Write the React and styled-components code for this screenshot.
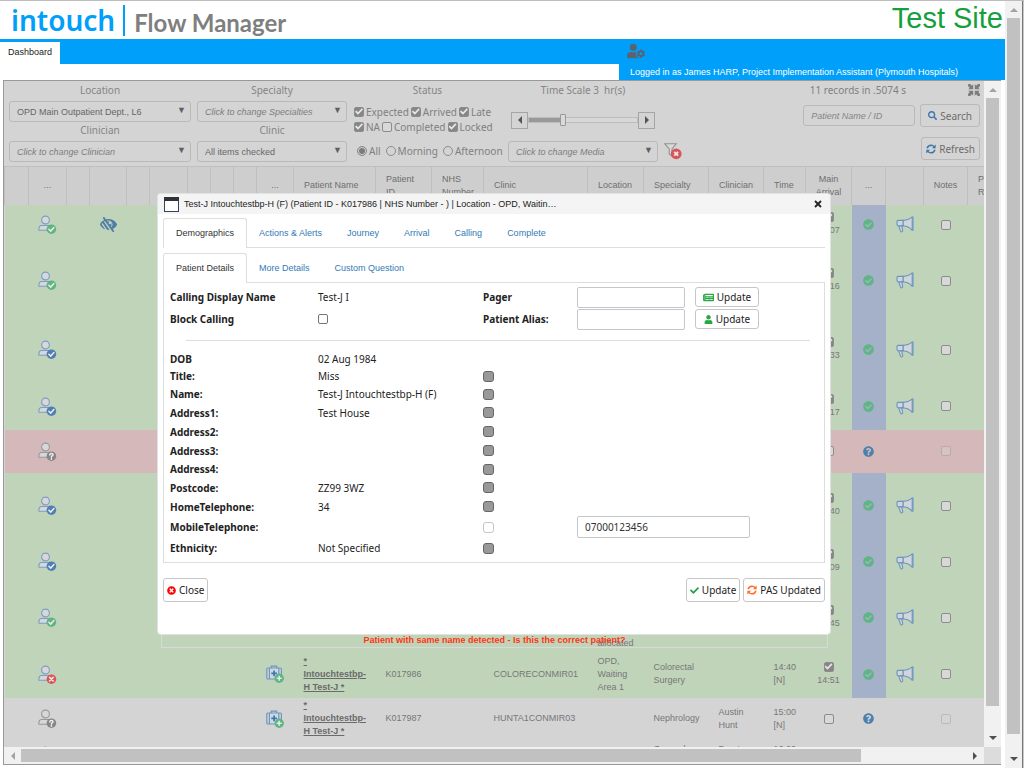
import React from "react";
import styled, { createGlobalStyle } from "styled-components";
import {
  FaCheck,
  FaCheckCircle,
  FaLowVision,
  FaNewspaper,
  FaQuestionCircle,
  FaSearch,
  FaTimesCircle,
  FaUser,
  FaUserCog,
} from "react-icons/fa";

const colors = {
  brand: "#009ffa",
  dim: "#d4d4d4",
  dimHeader: "#cecece",
  dimBorder: "#b9b9b9",
  dimText: "#777",
  green: "#c0d4ba",
  red: "#d5b9ba",
  status: "#a4b1c9",
  badgeBlue: "#4f7fb5",
  badgeGreen: "#5fb583",
  badgeRed: "#db5459",
  badgeGray: "#868686",
};

const arial = '"Liberation Sans", Arial, sans-serif';
const noto = '"Noto Sans", "Open Sans", sans-serif';

const columns = [
  { width: 24 },
  { width: 38, title: "...", center: true },
  { width: 23 },
  { width: 37 },
  { width: 23 },
  { width: 38 },
  { width: 23 },
  { width: 23 },
  { width: 23 },
  { width: 37, title: "...", center: true },
  { width: 82, title: "Patient Name" },
  { width: 56, title: "Patient\nID" },
  { width: 52, title: "NHS\nNumber" },
  { width: 104, title: "Clinic" },
  { width: 56, title: "Location" },
  { width: 65, title: "Specialty" },
  { width: 55, title: "Clinician" },
  { width: 42, title: "Time" },
  { width: 46, title: "Main\nArrival", center: true },
  { width: 34, title: "...", center: true },
  { width: 38 },
  { width: 44, title: "Notes", center: true },
  { width: 137, title: "Patient\nReady" },
];

const rows = [
  { height: 40, tone: "green", badge: "greenCheck", hidden: true, arrived: "14:07" },
  { height: 72, tone: "green", badge: "greenCheck", arrived: "14:16" },
  { height: 66, tone: "green", badge: "blueCheck", arrived: "14:33" },
  { height: 47, tone: "green", badge: "blueCheck", arrived: "14:17" },
  { height: 43, tone: "red", badge: "question" },
  { height: 66, tone: "green", badge: "blueCheck", arrived: "14:40" },
  { height: 46, tone: "green", badge: "blueCheck", arrived: "14:09" },
  {
    height: 66,
    tone: "green",
    badge: "greenCheck",
    arrived: "14:45",
    location: "OPD,\nWaiting\nArea 1\nNot\nallocated",
  },
  {
    height: 47,
    tone: "green",
    badge: "cross",
    kit: true,
    name: "*\nIntouchtestbp-\nH Test-J *",
    id: "K017986",
    clinic: "COLORECONMIR01",
    location: "OPD,\nWaiting\nArea 1",
    specialty: "Colorectal\nSurgery",
    time: "14:40\n[N]",
    arrived: "14:51",
  },
  {
    height: 42,
    badge: "question",
    kit: true,
    name: "*\nIntouchtestbp-\nH Test-J *",
    id: "K017987",
    clinic: "HUNTA1CONMIR03",
    specialty: "Nephrology",
    clinician: "Austin\nHunt",
    time: "15:00\n[N]",
  },
  {
    height: 32,
    badge: "question",
    kit: true,
    specialty: "General\nSurgery",
    clinician: "Brent\nHunt",
    time: "16:00\n[N]",
  },
];

const details = [
  { label: "DOB", value: "02 Aug 1984", height: 17 },
  { label: "Title:", value: "Miss", height: 18, locked: true },
  { label: "Name:", value: "Test-J Intouchtestbp-H (F)", height: 18, locked: true },
  { label: "Address1:", value: "Test House", height: 19, locked: true },
  { label: "Address2:", height: 19, locked: true },
  { label: "Address3:", height: 19, locked: true },
  { label: "Address4:", height: 18, locked: true },
  { label: "Postcode:", value: "ZZ99 3WZ", height: 19, locked: true },
  { label: "HomeTelephone:", value: "34", height: 19, locked: true },
  { label: "MobileTelephone:", height: 22, phone: "07000123456" },
  { label: "Ethnicity:", value: "Not Specified", height: 20, locked: true },
];

/* icons */

const badgeShapes = {
  greenCheck: { fill: colors.badgeGreen, d: "M10.9 14.3l1.8 1.8 3.2-3.5" },
  blueCheck: { fill: colors.badgeBlue, d: "M10.9 14.3l1.8 1.8 3.2-3.5" },
  cross: { fill: colors.badgeRed, d: "M11.6 12.4l3.6 3.6M15.2 12.4l-3.6 3.6" },
  question: {
    fill: colors.badgeGray,
    d: "M11.8 12.9c0-2 3.2-1.9 3.2 0 0 1-1.6 1-1.6 2M13.4 16.4v.8",
  },
};

const PersonIcon = ({ badge }) => {
  const { fill, d } = badgeShapes[badge];
  const outline = badge === "question" ? "#999" : "#7e9dc4";

  return (
    <Svg width="19" height="19" viewBox="0 0 19 19">
      <circle cx="7.5" cy="5" r="3.9" fill="#d6d8dc" stroke={outline} strokeWidth="1.1" />
      <path
        d="M.9 15.3v-1.8c0-1.8 1.2-3 3-3h7.2c1.8 0 3 1.2 3 3v1.8z"
        fill="#d6d8dc"
        stroke={outline}
        strokeWidth="1.1"
      />
      <circle cx="13.4" cy="14.2" r="4.8" fill={fill} />
      <path d={d} fill="none" stroke="#ececec" strokeWidth="1.5" strokeLinecap="round" />
    </Svg>
  );
};

const MegaphoneIcon = () => (
  <Svg width="18" height="17" viewBox="0 0 18 17">
    <g fill="#d2d6dc" stroke="#6c95be" strokeWidth="1.1" strokeLinejoin="round">
      <path d="M2.5 9.6L4.6 15.2c.6 1.2 2.4.6 2.1-.8L5.6 9.6z" />
      <path d="M7 4.4C11 4.3 13.8 3 16.2.9v13.4C13.8 11.5 11 9.9 7 9.7z" />
      <path d="M2 4.4h5v5.3H2C.6 9.7.6 4.4 2 4.4z" />
      <path d="M17 .6v14.2M4 9.7h4" fill="none" />
    </g>
  </Svg>
);

const MedkitIcon = () => (
  <Svg width="18" height="18" viewBox="0 0 18 18">
    <g fill="#cfd8de" stroke="#6f96bd" strokeWidth="1.2">
      <path d="M5.3 3V1.2h5.4V3" fill="none" />
      <rect x=".8" y="3" width="14.6" height="11" rx="1" />
      <path d="M3.4 3v11M12.8 3v11" />
    </g>
    <path d="M8.1 5.6v5.6M5.3 8.4h5.6" stroke="#3f75ad" strokeWidth="1.7" />
    <circle cx="13.2" cy="13.2" r="4.7" fill={colors.badgeGreen} />
    <path d="M13.2 10.7v5M10.7 13.2h5" stroke="#e4ece6" strokeWidth="1.5" />
  </Svg>
);

const RefreshIcon = ({ color }) => (
  <Svg width="10" height="10" viewBox="0 0 12 12">
    <g fill="none" stroke={color} strokeWidth="1.8">
      <path d="M1.3 5.2C2 2.8 3.8 1.4 6 1.4c1.5 0 2.8.6 3.7 1.8" />
      <path d="M10.7 6.8C10 9.2 8.2 10.6 6 10.6c-1.5 0-2.8-.6-3.7-1.8" />
    </g>
    <path d="M11.6.6v4.4H7.2zM.4 11.4V7h4.4z" fill={color} />
  </Svg>
);

const ClearFilterIcon = () => (
  <Svg width="18" height="17" viewBox="0 0 18 17">
    <path
      d="M.8.8h11.4L8 6v7.2L5.2 11V6z"
      fill="#d9d9d9"
      stroke="#929292"
      strokeWidth="1.1"
    />
    <circle cx="12.2" cy="10.8" r="5.4" fill={colors.badgeRed} />
    <path d="M10.3 8.9l3.8 3.8M14.1 8.9l-3.8 3.8" stroke="#e8e8e8" strokeWidth="1.9" />
  </Svg>
);

const CompressIcon = () => (
  <Svg width="12" height="12" viewBox="0 0 12 12">
    <path
      d="M5.2 5.2V.3L3.8 1.7 2.2.1H.1v2.1l1.6 1.6L.3 5.2zM6.8 5.2V.3l1.4 1.4L9.8.1h2.1v2.1l-1.6 1.6 1.4 1.4zM5.2 6.8v4.9l-1.4-1.4-1.6 1.6H.1V9.8l1.6-1.6L.3 6.8zM6.8 6.8v4.9l1.4-1.4 1.6 1.6h2.1V9.8l-1.6-1.6 1.4-1.4z"
      fill="#7c7c7c"
    />
  </Svg>
);

const WindowIcon = () => (
  <Svg width="15" height="15" viewBox="0 0 15 15">
    <rect x=".5" y=".5" width="14" height="14" fill="#fff" stroke="#35425c" />
    <path d="M0 0h15v4H0z" fill="#2f3237" />
  </Svg>
);

const arrowShapes = {
  up: "M0 6l4-4 4 4z",
  down: "M0 2l4 4 4-4z",
  left: "M6 0L2 4l4 4z",
  right: "M2 0l4 4-4 4z",
};

const Arrow = ({ to, color }) => (
  <Svg width="8" height="8" viewBox="0 0 8 8">
    <path d={arrowShapes[to]} fill={color} />
  </Svg>
);

/* building blocks */

const Dropdown = ({ label, value, italic }) => (
  <Field>
    {label && <FieldLabel htmlFor={label}>{label}</FieldLabel>}
    <SelectWrap>
      <Select id={label} aria-label={value} $italic={italic}>
        <option>{value}</option>
      </Select>
      <SelectArrow>▼</SelectArrow>
    </SelectWrap>
  </Field>
);

const Tick = ({ label, ...props }) => (
  <TickLabel>
    <Checkbox type="checkbox" $dim {...props} />
    {label}
  </TickLabel>
);

const Period = ({ label, ...props }) => (
  <TickLabel>
    <Radio type="radio" name="period" {...props} />
    {label}
  </TickLabel>
);

const Filters = () => (
  <FilterBar>
    <Stack>
      <Dropdown label="Location" value="OPD Main Outpatient Dept., L6" />
      <Dropdown label="Clinician" value="Click to change Clinician" italic />
    </Stack>
    <Stack>
      <Dropdown label="Specialty" value="Click to change Specialties" italic />
      <Dropdown label="Clinic" value="All items checked" />
    </Stack>
    <Stack>
      <FieldLabel as="span">Status</FieldLabel>
      <Ticks>
        <TickRow>
          <Tick label="Expected" defaultChecked />
          <Tick label="Arrived" defaultChecked />
          <Tick label="Late" defaultChecked />
        </TickRow>
        <TickRow>
          <Tick label="NA" defaultChecked />
          <Tick label="Completed" />
          <Tick label="Locked" defaultChecked />
        </TickRow>
      </Ticks>
      <Periods>
        <Period label="All" defaultChecked />
        <Period label="Morning" />
        <Period label="Afternoon" />
      </Periods>
    </Stack>
    <Stack>
      <FieldLabel htmlFor="scale">Time Scale 3 &nbsp;hr(s)</FieldLabel>
      <SliderRow>
        <StepButton aria-label="Less">
          <Arrow to="left" color="#555" />
        </StepButton>
        <Slider id="scale" type="range" min="0" max="10" defaultValue="3" />
        <StepButton aria-label="More">
          <Arrow to="right" color="#555" />
        </StepButton>
      </SliderRow>
      <Dropdown value="Click to change Media" italic />
    </Stack>
    <ClearFilter aria-label="Clear filters">
      <ClearFilterIcon />
    </ClearFilter>
    <SearchArea>
      <RecordLine>
        <span>11 records in .5074 s</span>
        <CompressIcon />
      </RecordLine>
      <SearchLine>
        <SearchInput aria-label="Patient Name / ID" placeholder="Patient Name / ID" />
        <DimButton>
          <FaSearch size={9} color="#3f75ad" />
          Search
        </DimButton>
      </SearchLine>
      <DimButton $tight>
        <RefreshIcon color="#3f75ad" />
        Refresh
      </DimButton>
    </SearchArea>
  </FilterBar>
);

const QueueRow = ({ row }) => (
  <Row $height={row.height} $tone={row.tone}>
    <Cell />
    <Cell $center>
      <PersonIcon badge={row.badge} />
    </Cell>
    <Cell />
    <Cell $center>{row.hidden && <FaLowVision size={17} color="#4f7fa8" />}</Cell>
    <Cell colSpan={5} />
    <Cell $center>{row.kit && <MedkitIcon />}</Cell>
    <Cell>{row.name && <PatientLink href="#patient">{row.name}</PatientLink>}</Cell>
    <Cell>{row.id}</Cell>
    <Cell />
    <Cell>{row.clinic}</Cell>
    <Cell>{row.location}</Cell>
    <Cell>{row.specialty}</Cell>
    <Cell>{row.clinician}</Cell>
    <Cell>{row.time}</Cell>
    <Cell $center>
      <Centered>
        <Checkbox type="checkbox" aria-label="Arrived" $dim defaultChecked={!!row.arrived} />
        {row.arrived && <span>{row.arrived}</span>}
      </Centered>
    </Cell>
    <Cell $center $status={!!row.arrived}>
      {row.arrived ? (
        <FaCheckCircle size={11} color={colors.badgeGreen} />
      ) : (
        <FaQuestionCircle size={11} color="#4c80ad" />
      )}
    </Cell>
    <Cell $center>{row.arrived && <MegaphoneIcon />}</Cell>
    <Cell $center>
      <Centered>
        <Checkbox type="checkbox" aria-label="Notes" $dim disabled={!row.arrived} />
      </Centered>
    </Cell>
    <Cell />
  </Row>
);

const Queue = () => (
  <Table>
    <colgroup>
      {columns.map((column, i) => (
        <Column key={i} $width={column.width} />
      ))}
    </colgroup>
    <thead>
      <tr>
        {columns.map((column, i) => (
          <HeadCell key={i} $center={column.center}>
            {column.title}
          </HeadCell>
        ))}
      </tr>
    </thead>
    <tbody>
      {rows.map((row, i) => (
        <QueueRow key={i} row={row} />
      ))}
    </tbody>
  </Table>
);

const PatientDialog = () => (
  <DialogWrap>
    <Dialog role="dialog" aria-label="Patient">
      <DialogHeader>
        <WindowIcon />
        <DialogTitle>
          Test-J Intouchtestbp-H (F) (Patient ID - K017986 | NHS Number - ) | Location - OPD,
          Waitin…
        </DialogTitle>
        <CloseCross aria-label="Close window">
          <Svg width="8" height="8" viewBox="0 0 8 8">
            <path d="M1 1l6 6M7 1L1 7" stroke="#222" strokeWidth="1.8" />
          </Svg>
        </CloseCross>
      </DialogHeader>
      <DialogBody>
        <Tabs>
          <Tab $active>Demographics</Tab>
          <Tab>Actions &amp; Alerts</Tab>
          <Tab>Journey</Tab>
          <Tab>Arrival</Tab>
          <Tab>Calling</Tab>
          <Tab>Complete</Tab>
        </Tabs>
        <Tabs $inner>
          <Tab $active>Patient Details</Tab>
          <Tab>More Details</Tab>
          <Tab>Custom Question</Tab>
        </Tabs>
        <Panel>
          <DetailRow $height={22}>
            <Label as="span">Calling Display Name</Label>
            <span>Test-J I</span>
            <Label htmlFor="pager">Pager</Label>
            <Controls>
              <TextInput id="pager" />
              <SmallButton>
                <FaNewspaper size={11} color="#28a745" />
                Update
              </SmallButton>
            </Controls>
          </DetailRow>
          <DetailRow $height={22}>
            <Label htmlFor="block">Block Calling</Label>
            <Checkbox id="block" type="checkbox" />
            <Label htmlFor="alias">Patient Alias:</Label>
            <Controls>
              <TextInput id="alias" />
              <SmallButton>
                <FaUser size={9} color="#28a745" />
                Update
              </SmallButton>
            </Controls>
          </DetailRow>
          <Divider />
          {details.map(({ label, value, height, locked, phone }) => (
            <DetailRow key={label} $height={height}>
              <Label as={phone ? "label" : "span"} htmlFor={phone && "mobile"}>
                {label}
              </Label>
              <span>{value}</span>
              {locked || phone ? (
                <LockBox type="checkbox" aria-label={label} disabled={locked} />
              ) : (
                <span />
              )}
              {phone && <TextInput id="mobile" $wide defaultValue={phone} />}
            </DetailRow>
          ))}
        </Panel>
        <Footer>
          <FooterButton>
            <FaTimesCircle size={9} color="#f00" />
            Close
          </FooterButton>
          <FooterGroup>
            <FooterButton>
              <FaCheck size={9} color="#28a04a" />
              Update
            </FooterButton>
            <FooterButton>
              <RefreshIcon color="#ff6a2b" />
              PAS Updated
            </FooterButton>
          </FooterGroup>
        </Footer>
      </DialogBody>
    </Dialog>
    <Warning>Patient with same name detected - Is this the correct patient?</Warning>
  </DialogWrap>
);

const App = () => (
  <>
    <GlobalStyle />
    <Page>
      <Main>
        <Header>
          <Brand>intouch</Brand>
          <Product>Flow Manager</Product>
          <SiteName>Test Site</SiteName>
        </Header>
        <Nav>
          <NavBar>
            <NavTab href="#dashboard">Dashboard</NavTab>
          </NavBar>
          <UserPanel>
            <FaUserCog size={18} color="#5a6470" />
            <span>
              Logged in as James HARP, Project Implementation Assistant (Plymouth Hospitals)
            </span>
          </UserPanel>
        </Nav>
        <Frame>
          <Content>
            <Filters />
            <Queue />
            <Overlay>
              <PatientDialog />
            </Overlay>
          </Content>
          <VerticalBar>
            <Arrow to="up" color="#a3a3a3" />
            <Thumb $share={608} />
            <Space $share={20} />
            <Arrow to="down" color="#505050" />
          </VerticalBar>
          <HorizontalBar>
            <Arrow to="left" color="#a3a3a3" />
            <Thumb $share={841} />
            <Space $share={102} />
            <Arrow to="right" color="#505050" />
          </HorizontalBar>
          <Corner />
        </Frame>
      </Main>
      <VerticalBar>
        <Arrow to="up" color="#a3a3a3" />
        <Thumb $share={716} />
        <Space $share={13} />
        <Arrow to="down" color="#505050" />
      </VerticalBar>
      <Edge />
    </Page>
  </>
);

const GlobalStyle = createGlobalStyle`
  * {
    box-sizing: border-box;
  }

  body {
    margin: 0;
    background: #fff;
    font-family: ${arial};
    font-size: 9px;
  }

  button, input, select {
    margin: 0;
    font: inherit;
  }
`;

const Svg = styled.svg`
  display: block;
  flex: none;
`;

const Page = styled.div`
  display: flex;
  height: 100vh;
  overflow: hidden;
  border-top: 1px solid #bdbdbd;
`;

const Main = styled.div`
  flex: 1;
  min-width: 0;
  display: flex;
  flex-direction: column;
`;

const Edge = styled.div`
  width: 2px;
  border-left: 1px solid #777;
  background: #c9c9c9;
`;

const Header = styled.header`
  display: flex;
  align-items: center;
  height: 38px;
  padding: 0 2px 0 11px;
`;

const Brand = styled.span`
  padding-right: 8px;
  border-right: 2px solid ${colors.brand};
  color: ${colors.brand};
  font-family: ${noto};
  font-size: 28px;
  font-weight: 600;
  line-height: 31px;
`;

const Product = styled.span`
  flex: 1;
  padding: 5px 0 0 9px;
  color: #7f7f7f;
  font-family: Lato, sans-serif;
  font-size: 24px;
  font-weight: 700;
  line-height: 28px;
`;

const SiteName = styled.span`
  padding-bottom: 4px;
  color: #16a03c;
  font-size: 29px;
  line-height: 32px;
`;

const Nav = styled.nav`
  display: flex;
  height: 41px;
  flex: none;
`;

const NavBar = styled.div`
  flex: 1;
  display: flex;
  height: 25px;
  padding-top: 3px;
  background: ${colors.brand};
`;

const NavTab = styled.a`
  padding: 0 8px;
  background: #fff;
  color: #222;
  line-height: 20px;
  text-decoration: none;
`;

const UserPanel = styled.div`
  display: flex;
  flex-direction: column;
  justify-content: space-between;
  width: 386px;
  padding: 3px 8px 2px;
  background: ${colors.brand};
  color: #fff;
  line-height: 12px;

  span {
    padding-left: 3px;
  }
`;

const Frame = styled.div`
  flex: 1;
  min-height: 0;
  display: grid;
  grid-template-columns: minmax(0, 1fr) 17px;
  grid-template-rows: minmax(0, 1fr) 17px;
  margin: 0 4px 3px 3px;
  border: 1px solid #999;
  border-right: 0;
`;

const Content = styled.div`
  position: relative;
  overflow: hidden;
  background: ${colors.dim};
  color: ${colors.dimText};
`;

const VerticalBar = styled.div`
  display: flex;
  flex-direction: column;
  align-items: center;
  gap: 4px;
  width: 17px;
  padding: 5px 2px;
  background: #f1f1f1;
`;

const HorizontalBar = styled.div`
  display: flex;
  align-items: center;
  gap: 4px;
  padding: 2px 5px;
  background: #f1f1f1;
`;

const Thumb = styled.div`
  flex: ${props => props.$share};
  align-self: stretch;
  background: #c1c1c1;
`;

const Space = styled.div`
  flex: ${props => props.$share};
`;

const Corner = styled.div`
  background: #dcdcdc;
`;

const FilterBar = styled.form`
  display: grid;
  grid-template-columns: 182px 150px 149px 150px 18px minmax(0, 1fr);
  column-gap: 6px;
  height: 85px;
  padding: 0 4px 0 5px;
`;

const Stack = styled.div`
  display: flex;
  flex-direction: column;
`;

const Field = styled.div`
  display: flex;
  flex-direction: column;
`;

const FieldLabel = styled.label`
  margin-bottom: 2px;
  color: #858585;
  font-family: ${noto};
  font-size: 10px;
  line-height: 18px;
  text-align: center;
  white-space: nowrap;
`;

const SelectWrap = styled.div`
  position: relative;
  height: 20px;
`;

const Select = styled.select`
  width: 100%;
  height: 21px;
  padding: 0 18px 0 7px;
  appearance: none;
  border: 1px solid ${colors.dimBorder};
  border-radius: 3px;
  background: transparent;
  color: ${props => props.$italic ? "#7d7d7d" : "#666"};
  font-style: ${props => props.$italic ? "italic" : "normal"};
`;

const SelectArrow = styled.span`
  position: absolute;
  top: 0;
  right: 5px;
  color: #606060;
  font-size: 9px;
  line-height: 19px;
  pointer-events: none;
`;

const Checkbox = styled.input`
  display: block;
  flex: none;
  width: 10px;
  height: 10px;
  appearance: none;
  border: 1px solid ${props => props.$dim ? "#8c8c8c" : "#767676"};
  border-radius: 2px;
  background: ${props => props.$dim ? "#d8d8d8" : "#fff"};

  &:checked {
    background: #868686;
  }

  &:checked::before {
    content: "";
    display: block;
    width: 8px;
    height: 8px;
    background: #e6e6e6;
    clip-path: polygon(0% 52%, 16% 36%, 38% 58%, 84% 10%, 100% 26%, 38% 90%);
  }

  &:disabled {
    opacity: 0.35;
  }
`;

const Radio = styled.input`
  flex: none;
  width: 10px;
  height: 10px;
  appearance: none;
  border: 1px solid #8c8c8c;
  border-radius: 50%;

  &:checked {
    background: #7b7b7b;
    box-shadow: inset 0 0 0 1px ${colors.dim};
  }
`;

const Ticks = styled.div`
  padding: 3px 0 7px 1px;
`;

const TickRow = styled.div`
  display: flex;
  gap: 2px;
  height: 15px;
`;

const TickLabel = styled.label`
  display: flex;
  align-items: center;
  gap: 2px;
  color: #808080;
  font-family: ${noto};
  font-size: 10px;
`;

const Periods = styled.div`
  display: flex;
  gap: 5px;
  height: 20px;
  padding-left: 4px;
`;

const SliderRow = styled.div`
  display: flex;
  align-items: center;
  height: 40px;
  padding: 0 3px 2px;
`;

const StepButton = styled.button`
  display: grid;
  place-items: center;
  flex: none;
  width: 17px;
  height: 17px;
  padding: 0;
  border: 1px solid #a5a5a5;
  background: #d4d4d4;
`;

const Slider = styled.input`
  flex: 1;
  min-width: 0;
  height: 12px;
  appearance: none;
  background: transparent;

  &::-webkit-slider-runnable-track {
    height: 6px;
    border: 1px solid #bcbcbc;
    background: linear-gradient(to right, #999 30%, #d8d8d8 30%);
  }

  &::-webkit-slider-thumb {
    width: 6px;
    height: 12px;
    margin-top: -4px;
    appearance: none;
    border: 1px solid #999;
    border-radius: 1px;
    background: #dadada;
  }
`;

const ClearFilter = styled.button`
  align-self: end;
  margin-bottom: 6px;
  padding: 0;
  border: 0;
  background: none;
`;

const SearchArea = styled.div`
  display: flex;
  flex-direction: column;
  align-items: flex-end;
`;

const RecordLine = styled.div`
  display: flex;
  align-items: center;
  gap: 62px;
  height: 18px;
  color: #808080;
  font-family: ${noto};
  font-size: 10px;
  white-space: nowrap;
`;

const SearchLine = styled.div`
  display: flex;
  align-items: center;
  gap: 5px;
  padding: 5px 0 10px;
`;

const SearchInput = styled.input`
  width: 112px;
  height: 21px;
  padding: 0 7px;
  border: 1px solid ${colors.dimBorder};
  border-radius: 3px;
  background: transparent;

  &::placeholder {
    color: #858585;
    font-style: italic;
  }
`;

const Button = styled.button`
  display: flex;
  align-items: center;
  justify-content: center;
  gap: 3px;
  border: 1px solid #c6c6c6;
  border-radius: 3px;
  background: #fff;
  color: #222;
  font-family: ${noto};
  font-size: 10px;
  line-height: 14px;
  white-space: nowrap;
`;

const DimButton = styled(Button)`
  height: 23px;
  padding: 0 ${props => props.$tight ? "4px" : "7px"};
  border-color: ${colors.dimBorder};
  background: transparent;
  color: #6c6c6c;
`;

const SmallButton = styled(Button)`
  width: 64px;
  height: 20px;
  padding: 0;
`;

const FooterButton = styled(Button)`
  height: 24px;
  padding: 0 3px;
`;

const Table = styled.table`
  width: 1100px;
  table-layout: fixed;
  border-collapse: collapse;
  line-height: 13px;
`;

const Column = styled.col`
  width: ${props => props.$width}px;
`;

const HeadCell = styled.th`
  height: 38px;
  padding: 0 0 0 ${props => props.$center ? "0" : "10px"};
  border: solid #bfbfbf;
  border-width: 1px 1px 0;
  background: ${colors.dimHeader};
  color: #6f6f6f;
  font-weight: 400;
  text-align: ${props => props.$center ? "center" : "left"};
  white-space: pre-line;
`;

const Row = styled.tr`
  height: ${props => props.$height}px;
  background: ${props => colors[props.$tone] || "transparent"};
`;

const Cell = styled.td`
  padding: 0 0 0 ${props => props.$center ? "0" : "10px"};
  background: ${props => props.$status ? colors.status : "transparent"};
  text-align: ${props => props.$center ? "center" : "left"};
  white-space: pre-line;

  > svg {
    display: block;
    margin: 0 auto;
  }
`;

const PatientLink = styled.a`
  color: #6a6a6a;
  font-weight: 700;
`;

const Centered = styled.div`
  display: flex;
  flex-direction: column;
  align-items: center;
  gap: 2px;
`;

const Overlay = styled.div`
  position: absolute;
  inset: 0;
  display: grid;
  place-items: center;
`;

const DialogWrap = styled.div`
  position: relative;
  z-index: 0;
  width: 674px;
  max-width: 100%;
`;

const Dialog = styled.div`
  overflow: hidden;
  border: 1px solid #e2e2e2;
  border-radius: 4px;
  background: #fff;
  color: #222;
`;

const DialogHeader = styled.div`
  display: flex;
  align-items: center;
  gap: 5px;
  height: 20px;
  padding: 0 8px 0 6px;
  background: #f4f4f4;
`;

const DialogTitle = styled.span`
  flex: 1;
  padding-bottom: 1px;
  white-space: nowrap;
`;

const CloseCross = styled.button`
  padding: 0;
  border: 0;
  background: none;
`;

const DialogBody = styled.div`
  padding: 4px 5px 32px;
`;

const Tabs = styled.div`
  display: flex;
  height: 30px;
  margin-top: ${props => props.$inner ? "5px" : "0"};
  border-bottom: 1px solid #ddd;
`;

const Tab = styled.button`
  margin-right: -1px;
  margin-bottom: -1px;
  padding: 0 12px 2px;
  border: 1px solid ${props => props.$active ? "#ddd" : "transparent"};
  border-bottom: 0;
  border-radius: 3px 3px 0 0;
  background: ${props => props.$active ? "#fff" : "transparent"};
  color: ${props => props.$active ? "#333" : "#337ab7"};
`;

const Panel = styled.div`
  padding: 3px 6px 4px;
  border: 1px solid #ddd;
  border-top: 0;
  font-family: ${noto};
  font-size: 10px;
`;

const DetailRow = styled.div`
  display: grid;
  grid-template-columns: 148px 165px 94px 1fr;
  align-items: center;
  height: ${props => props.$height}px;
  line-height: 14px;
`;

const Label = styled.label`
  font-weight: 700;
`;

const Controls = styled.div`
  display: flex;
  align-items: center;
  gap: 10px;
`;

const TextInput = styled.input`
  width: ${props => props.$wide ? "173px" : "108px"};
  height: ${props => props.$wide ? "22px" : "21px"};
  padding: 0 7px;
  border: 1px solid #c3c7cc;
  border-radius: 2px;
  background: #fff;
  color: #333;
`;

const LockBox = styled.input`
  width: 11px;
  height: 11px;
  appearance: none;
  border: 1px solid #c4c4c4;
  border-radius: 3px;
  background: #fff;

  &:disabled {
    border-color: #666;
    background: #999;
  }
`;

const Divider = styled.hr`
  margin: 10px 8px 9px 16px;
  border: 0;
  border-top: 1px solid #ddd;
`;

const Footer = styled.div`
  display: flex;
  justify-content: space-between;
  padding-top: 15px;
`;

const FooterGroup = styled.div`
  display: flex;
  gap: 3px;
`;

const Warning = styled.div`
  position: absolute;
  right: 3px;
  bottom: -13px;
  left: 4px;
  z-index: -1;
  padding-top: 4px;
  border: 1px solid #d9d9d9;
  color: #ff3414;
  font-weight: 700;
  line-height: 14px;
  text-align: center;
`;

export default App;
